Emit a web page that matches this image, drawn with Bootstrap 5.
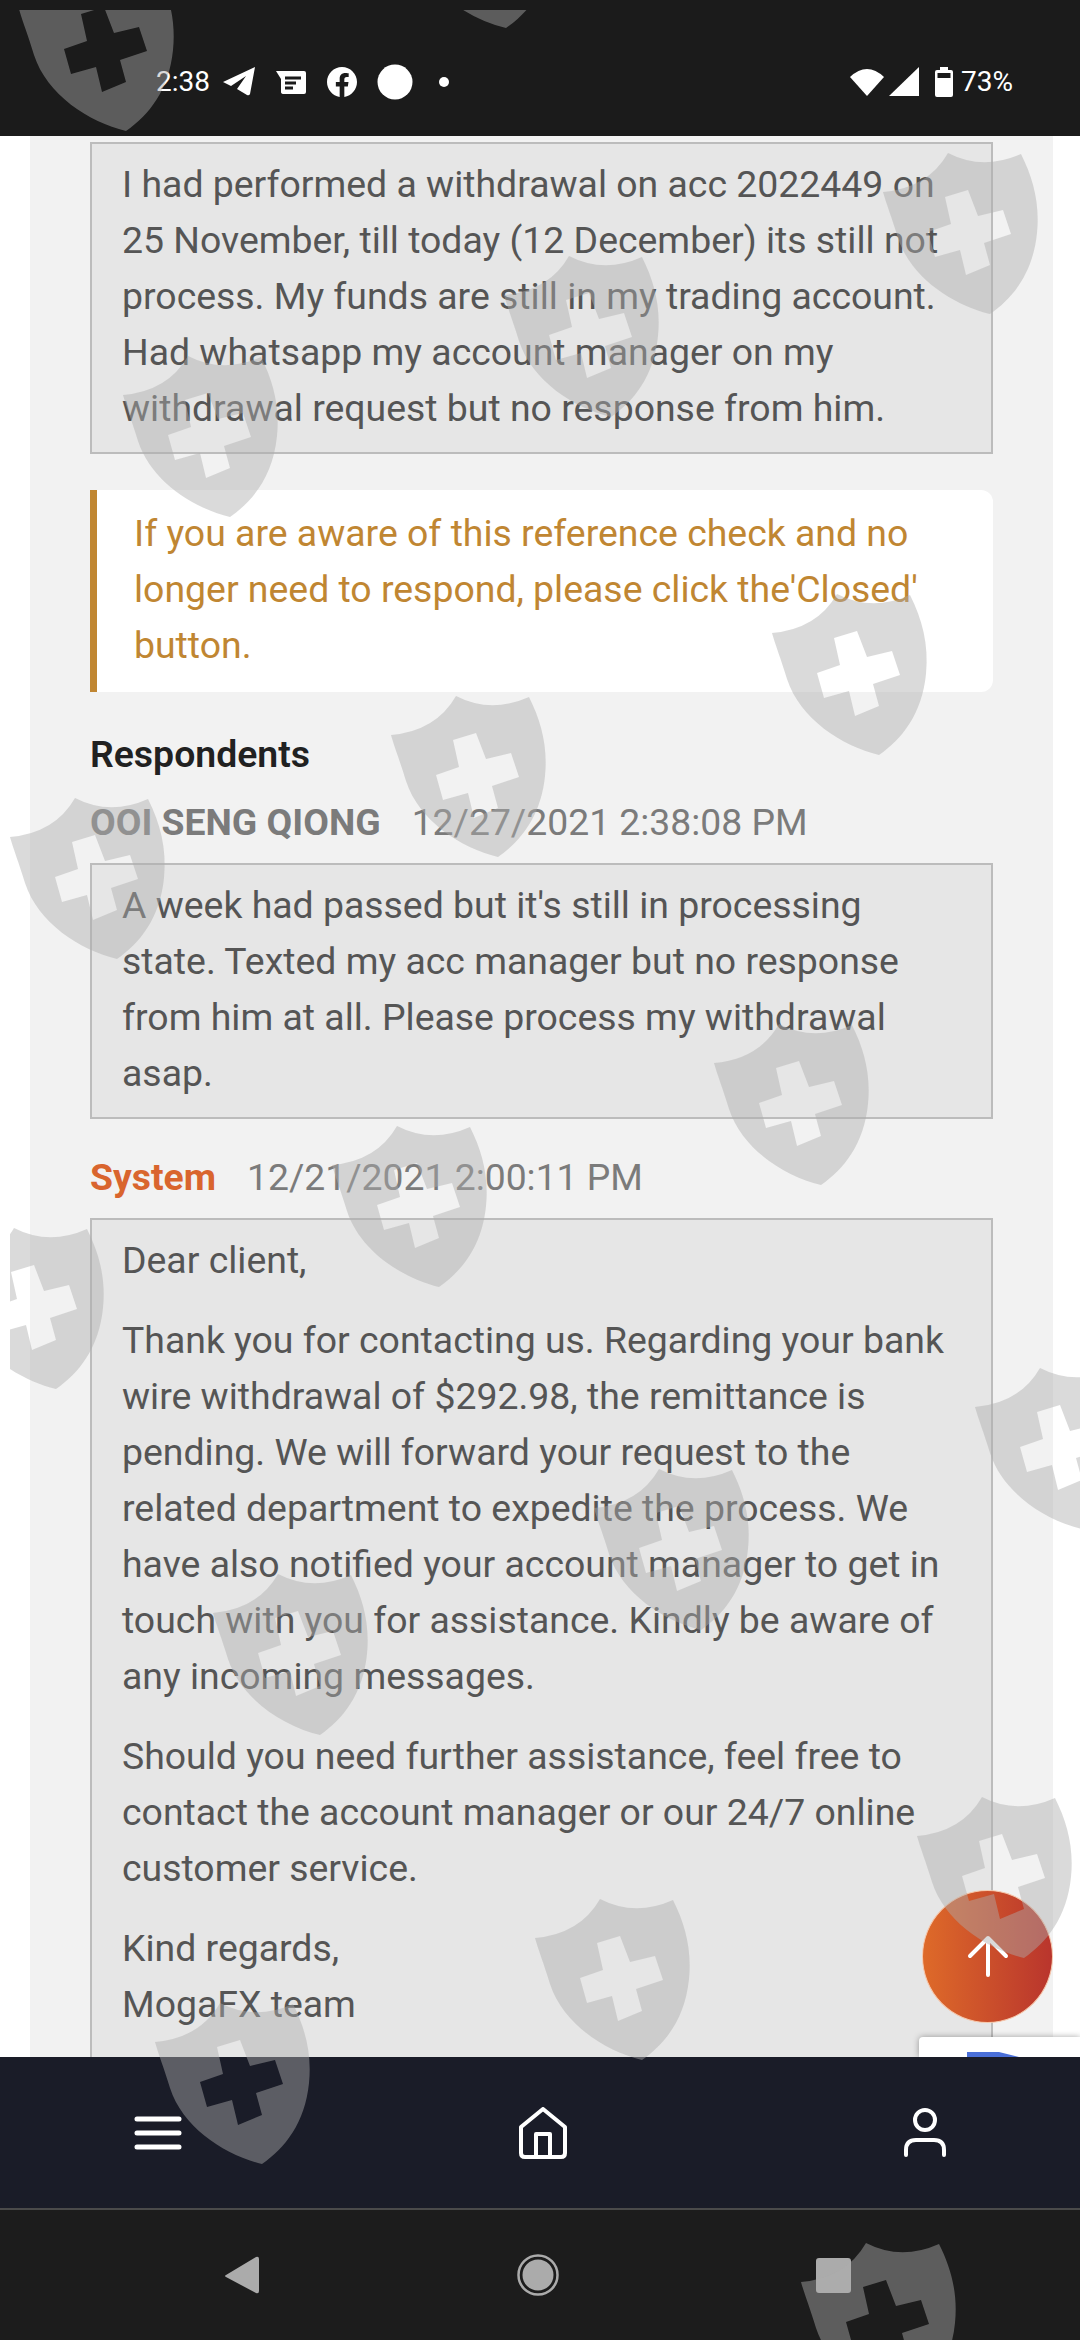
<!DOCTYPE html>
<html>
  <head>
    <meta charset="utf-8" />
    <title>Reference check</title>
    <link
      href="https://cdn.jsdelivr.net/npm/bootstrap@5.3.0/dist/css/bootstrap.min.css"
      rel="stylesheet"
    />
    <style>
      body {
        font-family: Roboto, "Liberation Sans", sans-serif;
        width: 1080px;
        height: 2340px;
        background: #fff;
      }

      .status-strip {
        height: 136px;
        padding: 27px 67px 0 156px;
        background: #1b1b1b;
        color: #fff;
        font-size: 28px;
      }

      .status-strip .clock {
        width: 66px;
      }

      .status-strip .app-icons {
        gap: 20px;
      }

      .status-strip .tiny-dot {
        margin-left: 6px;
      }

      .status-strip svg {
        display: block;
        fill: #fff;
      }

      .page-area {
        min-height: 0;
      }

      .page-panel {
        margin: 0 27px 0 30px;
        padding: 6px 60px 0;
        background: #f2f2f2;
        font-size: 37.4px;
        line-height: 56px;
        height: 100%;
      }

      .msg-box {
        padding: 12px 30px 16px;
        border: 2px solid #bcbcbc;
        background: #e6e6e6;
        color: #555;
      }

      .msg-box p {
        margin-bottom: 24px;
      }

      .msg-box p:last-child {
        margin-bottom: 0;
      }

      .notice {
        margin-top: 36px;
        padding: 15px 30px 19px 37px;
        border-left: 7px solid #c08632;
        border-radius: 0 12px 12px 0;
        background: #fff;
        color: #c08632;
      }

      .resp-title {
        margin: 34px 0 12px;
        font-size: 37.4px;
        line-height: 56px;
        font-weight: 600;
        color: #212121;
      }

      .resp-head {
        gap: 31px;
        margin-bottom: 13px;
        font-size: 37.3px;
        color: #7b7b7b;
      }

      .resp-head strong {
        font-weight: 700;
      }

      .resp-head .sys-name {
        color: #d9652e;
      }

      .resp-next {
        margin-top: 30px;
      }

      .to-top {
        right: 27px;
        bottom: 34px;
        width: 131px;
        height: 133px;
        border: 1px solid #f6c7ab;
        background: linear-gradient(90deg, #de6a29, #b9352d);
      }

      .captcha-tab {
        right: 0;
        bottom: 0;
        width: 161px;
        height: 20px;
        overflow: hidden;
        border-radius: 4px 0 0 0;
        background: #fff;
        box-shadow: 0 0 6px rgba(0, 0, 0, 0.35);
      }

      .app-nav {
        height: 151px;
        padding: 0 133px 0 134px;
        background: #1a1c28;
      }

      .phone-nav {
        height: 132px;
        padding: 0 229px 0 225px;
        border-top: 2px solid #4a4a4a;
        background: #1c1c1c;
      }

      .phone-nav svg {
        fill: #ababab;
      }

      .shield-layer {
        position: absolute;
        top: 0;
        left: 0;
        z-index: 10;
        pointer-events: none;
      }

      .shield-layer use {
        fill: rgba(172, 172, 172, 0.45);
      }
    </style>
  </head>
  <body class="position-relative overflow-hidden">
    <div class="d-flex flex-column h-100">
      <div class="status-strip d-flex align-items-center justify-content-between flex-shrink-0">
        <div class="d-flex align-items-center">
          <span class="clock">2:38</span>
          <div class="app-icons d-flex align-items-center">
            <svg width="34" height="30" viewBox="0 0 34 30">
              <path d="M1 15 33 0 28 27Q27 29 25 28L15 22 24 9 9 19Z" />
            </svg>
            <svg width="31" height="24" viewBox="0 0 31 24">
              <path d="M0 1H28Q30 1 30 3V22Q30 24 28 24H8Q5 24 5 22V9Z" />
              <path d="M9 8H25M9 13H20M9 18H17" stroke="#1b1b1b" stroke-width="3" />
            </svg>
            <svg width="30" height="30" viewBox="0 0 24 24">
              <path d="M24 12.07C24 5.4 18.63 0 12 0S0 5.4 0 12.07c0 6.03 4.39 11.02 10.13 11.93v-8.44H7.08v-3.49h3.05V9.41c0-3.02 1.79-4.69 4.53-4.69 1.31 0 2.68.24 2.68.24v2.97h-1.51c-1.49 0-1.96.93-1.96 1.85v2.26h3.33l-.53 3.49h-2.8V24C19.61 23.09 24 18.1 24 12.07z" />
            </svg>
            <svg width="36" height="36" viewBox="0 0 36 36"><circle cx="18" cy="18" r="17.5" /></svg>
            <svg class="tiny-dot" width="10" height="10" viewBox="0 0 10 10"><circle cx="5" cy="5" r="5" /></svg>
          </div>
        </div>
        <div class="d-flex align-items-center">
          <svg class="me-1" width="36" height="30" viewBox="0 0 36 30">
            <path d="M1 10Q18 -6 35 10L18 29Z" />
          </svg>
          <svg class="me-3" width="30" height="30" viewBox="0 0 30 30">
            <path d="M0 29 30 0V29Z" />
          </svg>
          <svg class="me-2" width="18" height="30" viewBox="0 0 18 30">
            <path d="M5 0H13V3H16Q18 3 18 5V28Q18 30 16 30H2Q0 30 0 28V5Q0 3 2 3H5Z" />
            <rect x="2.5" y="6" width="13" height="5" fill="#1b1b1b" />
          </svg>
          <span>73%</span>
        </div>
      </div>

      <div class="page-area flex-grow-1 position-relative overflow-hidden">
        <div class="page-panel">
          <div class="msg-box">
            <p>I had performed a withdrawal on acc 2022449 on 25 November, till today (12 December) its still not process. My funds are still in my trading account. Had whatsapp my account manager on my withdrawal request but no response from him.</p>
          </div>

          <div class="notice">If you are aware of this reference check and no longer need to respond, please click the'Closed' button.</div>

          <h5 class="resp-title">Respondents</h5>

          <div class="resp-head d-flex">
            <strong>OOI SENG QIONG</strong>
            <span>12/27/2021 2:38:08 PM</span>
          </div>
          <div class="msg-box">
            <p>A week had passed but it's still in processing state. Texted my acc manager but no response from him at all. Please process my withdrawal asap.</p>
          </div>

          <div class="resp-head resp-next d-flex">
            <strong class="sys-name">System</strong>
            <span>12/21/2021 2:00:11 PM</span>
          </div>
          <div class="msg-box pb-5">
            <p>Dear client,</p>
            <p>Thank you for contacting us. Regarding your bank wire withdrawal of $292.98, the remittance is pending. We will forward your request to the related department to expedite the process. We have also notified your account manager to get in touch with you for assistance. Kindly be aware of any incoming messages.</p>
            <p>Should you need further assistance, feel free to contact the account manager or our 24/7 online customer service.</p>
            <p>Kind regards,<br />MogaFX team</p>
          </div>
        </div>

        <button class="to-top btn rounded-circle position-absolute d-flex align-items-center justify-content-center p-0" type="button" aria-label="Back to top">
          <svg width="44" height="44" viewBox="0 0 44 44" fill="none" stroke="#fff" stroke-width="4" stroke-linecap="round" stroke-linejoin="round">
            <path d="M22 3V40M4 21 22 3 40 21" />
          </svg>
        </button>

        <div class="captcha-tab position-absolute">
          <svg class="d-block" width="161" height="20" viewBox="0 0 161 20">
            <path d="M48 15H80L100 20H48Z" fill="#4a6fd8" />
          </svg>
        </div>
      </div>

      <div class="app-nav d-flex align-items-center justify-content-between flex-shrink-0">
        <svg width="48" height="36" viewBox="0 0 48 36" fill="none" stroke="#fff" stroke-width="5" stroke-linecap="round">
          <path d="M3 4H45M3 18H45M3 32H45" />
        </svg>
        <svg width="48" height="52" viewBox="0 0 48 52" fill="none" stroke="#fff" stroke-width="4" stroke-linejoin="round">
          <path d="M24 2 46 20V46Q46 50 42 50H6Q2 50 2 46V20Z" />
          <path d="M17 50V27H31V50" />
        </svg>
        <svg width="44" height="52" viewBox="0 0 44 52" fill="none" stroke="#fff" stroke-width="4" stroke-linecap="round">
          <circle cx="22" cy="13" r="10" />
          <path d="M3 48V43Q3 33 13 33H31Q41 33 41 43V48" />
        </svg>
      </div>

      <div class="phone-nav d-flex align-items-center justify-content-between flex-shrink-0">
        <svg width="34" height="38" viewBox="0 0 34 38">
          <path d="M1 19 31 1Q34 0 34 3V35Q34 38 31 37L1 21Q-1 20 1 19Z" />
        </svg>
        <svg width="42" height="42" viewBox="0 0 42 42">
          <circle cx="21" cy="21" r="19.5" fill="none" stroke="#ababab" stroke-width="2.5" />
          <circle cx="21" cy="21" r="15.5" />
        </svg>
        <svg width="35" height="35" viewBox="0 0 35 35">
          <rect width="35" height="35" rx="3" />
        </svg>
      </div>
    </div>

    <!-- watermark tiles, they repeat across the whole screenshot -->
    <svg class="shield-layer" width="1080" height="2340" viewBox="0 0 1080 2340">
      <defs>
        <clipPath id="mark-clip"><rect x="10" y="10" width="1070" height="2330" /></clipPath>
        <path
          id="shield"
          fill-rule="evenodd"
          d="M65 0Q100 18 138 1C150 25 157 50 154 80C150 120 130 145 107 161C70 152 28 125 15 85C9 65 3 50 0 39Q45 35 65 0ZM62 44 85 37 95 63 120 57 128 81 101 90 107 112 83 122 77 97 52 104 45 79 68 71Z"
        />
      </defs>
      <g clip-path="url(#mark-clip)">
        <use href="#shield" x="399" y="-133" />
        <use href="#shield" x="19" y="-30" />
        <use href="#shield" x="883" y="153" />
        <use href="#shield" x="504" y="256" />
        <use href="#shield" x="123" y="356" />
        <use href="#shield" x="772" y="594" />
        <use href="#shield" x="391" y="696" />
        <use href="#shield" x="10" y="798" />
        <use href="#shield" x="714" y="1024" />
        <use href="#shield" x="332" y="1126" />
        <use href="#shield" x="-51" y="1228" />
        <use href="#shield" x="975" y="1368" />
        <use href="#shield" x="594" y="1469" />
        <use href="#shield" x="213" y="1574" />
        <use href="#shield" x="917" y="1797" />
        <use href="#shield" x="535" y="1899" />
        <use href="#shield" x="155" y="2003" />
        <use href="#shield" x="801" y="2243" />
      </g>
    </svg>

    <script src="https://cdn.jsdelivr.net/npm/bootstrap@5.3.0/dist/js/bootstrap.bundle.min.js"></script>
  </body>
</html>
